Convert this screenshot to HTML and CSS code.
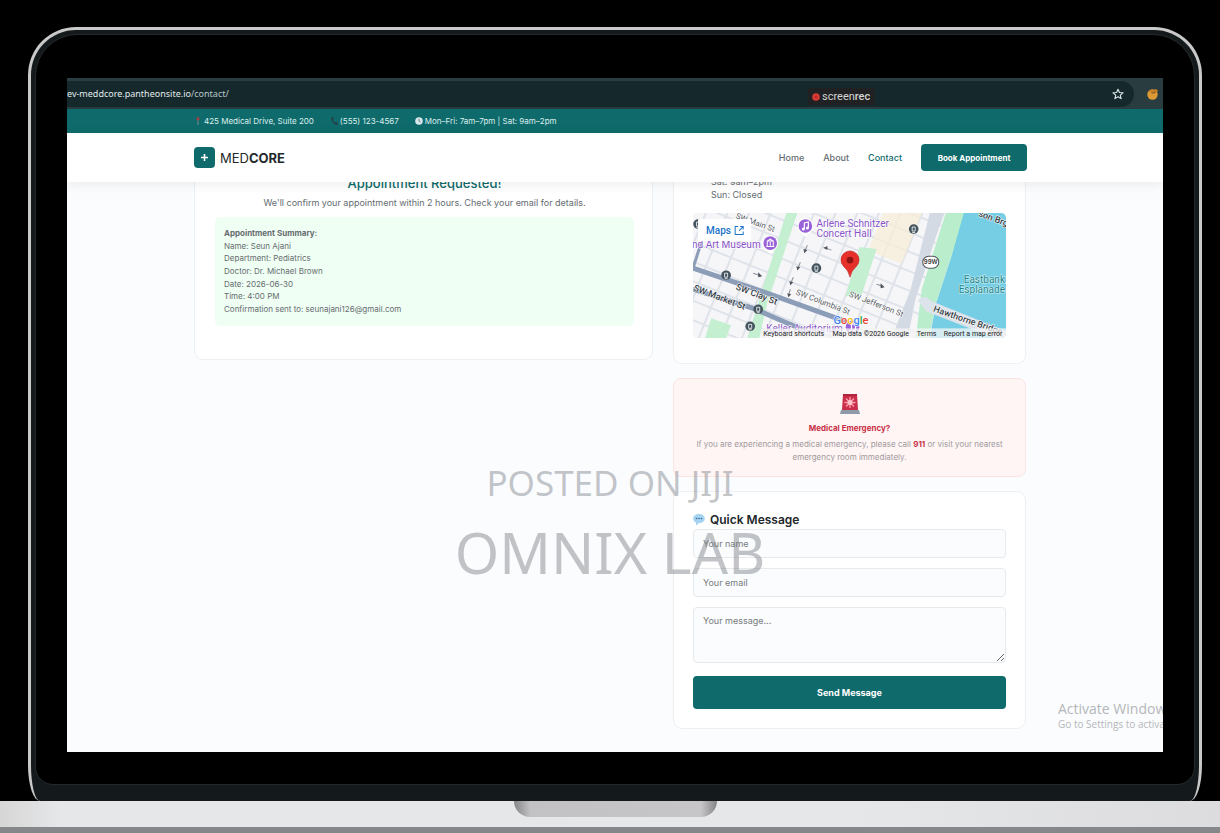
FILE: index.html
```html
<!DOCTYPE html>
<html lang="en">
<head>
    <meta charset="UTF-8">
    <meta name="viewport" content="width=device-width, initial-scale=1.0">
    <title>MedCore - Contact</title>
    <link rel="stylesheet" href="styles.css">
</head>
<body>
    <div class="lid">
        <div class="bezel">
            <div class="screen">
                <!-- Browser bar -->
                <div class="browser">
                    <div class="address">
                        <span class="url">ev-meddcore.pantheonsite.io<span>/contact/</span></span>
                        <svg class="star" viewBox="0 0 12 12"><path d="M6 1.2 7.4 4.5 11 4.8 8.3 7.1 9.1 10.6 6 8.7 2.9 10.6 3.7 7.1 1 4.8 4.6 4.5Z" fill="none" stroke="#dfe8e9" stroke-width="1.1" stroke-linejoin="round"/></svg>
                    </div>
                    <svg class="avatar" viewBox="0 0 12 12"><circle cx="5.5" cy="6.5" r="5.2" fill="#dc9a35"/><path d="M1.5 3.5 4 1.5 6 2.3 9 1 11 2.5 10 4 7 5Z" fill="#c97f25"/><path d="M4.5 4.7 6.5 5.2 8.5 4.2" stroke="#5d3c18" fill="none" stroke-width=".8"/></svg>
                    <div class="recorder">
                        <svg viewBox="0 0 8 8"><circle cx="4" cy="4" r="3.8" fill="#d83a34"/><circle cx="4" cy="4" r="1.5" fill="#b92a28"/></svg>
                        <span>screen<b>rec</b></span>
                    </div>
                </div>

                <div class="topbar">
                    <span><svg viewBox="0 0 8 10"><path d="M4 4V9" stroke="#6f8f92"/><circle cx="4" cy="2.8" r="1.6" fill="#a83d4a"/></svg>425 Medical Drive, Suite 200</span>
                    <span><svg viewBox="0 0 8 10"><path d="M1 1.5 2.8 1 3.8 3.3 2.8 4.3Q3.5 6 5.2 6.8L6.2 5.9 8 7.2 7 9Q2 9 1 1.5Z" fill="#263f49"/></svg>(555) 123-4567</span>
                    <span><svg viewBox="0 0 8 10"><circle cx="4" cy="5" r="3.8" fill="#d9e7ea"/><path d="M4 2.8V5L5.6 6" stroke="#546e7a" fill="none" stroke-width=".8"/></svg>Mon–Fri: 7am–7pm | Sat: 9am–2pm</span>
                </div>

                <header class="navbar">
                    <a class="logo" href="#">
                        <svg viewBox="0 0 21 21"><rect width="21" height="21" rx="4" fill="#0f6b6b"/><path d="M10.5 7V14M7 10.5H14" stroke="#fff" stroke-width="1.6"/></svg>
                        <span>MED<b>CORE</b></span>
                    </a>
                    <nav>
                        <a href="#">Home</a>
                        <a href="#">About</a>
                        <a class="active" href="#">Contact</a>
                        <button class="book">Book Appointment</button>
                    </nav>
                </header>

                <main>
                    <section class="card request">
                        <h2>Appointment Requested!</h2>
                        <p>We'll confirm your appointment within 2 hours. Check your email for details.</p>
                        <div class="summary">
                            <strong>Appointment Summary:</strong>
                            <span>Name: Seun Ajani</span>
                            <span>Department: Pediatrics</span>
                            <span>Doctor: Dr. Michael Brown</span>
                            <span>Date: 2026-06-30</span>
                            <span>Time: 4:00 PM</span>
                            <span>Confirmation sent to: seunajani126@gmail.com</span>
                        </div>
                    </section>

                    <div class="side">
                        <section class="card hours">
                            <p>Sat: 9am–2pm<br>Sun: Closed</p>
                            <svg class="map" viewBox="0 0 312 125">
                                <rect width="312" height="125" fill="#dfe3ea"/>
                                <!-- city blocks -->
                                <g transform="rotate(22 156 62)">
                                    <defs>
                                        <pattern id="blocks" width="20" height="18" patternUnits="userSpaceOnUse">
                                            <rect x="1" y="1" width="18" height="16" rx="1" fill="#f6f6f8"/>
                                        </pattern>
                                    </defs>
                                    <rect x="-60" y="-120" width="310" height="360" fill="url(#blocks)"/>
                                    <path d="M164-30h36v62h-36z" fill="#f8eed6" opacity=".7"/>
                                </g>
                                <!-- parks -->
                                <path d="M93 0H104L74 90 66 125H54L68 80Z" fill="#c4efd1"/>
                                <path d="M166 34 183 36 168 82 152 83Z" fill="#c4efd1"/>
                                <path d="M18 105 38 112 33 125H12Z" fill="#c4efd1"/>
                                <!-- river -->
                                <path d="M252 0H272L242 90 235 125H222L228 76Z" fill="#b9edcb"/>
                                <path d="M236 0H250L222 85 214 125H198L217 76Z" fill="#d3dae4"/>
                                <path d="M270 0H312V125H236L242 91 258 42Z" fill="#76cee5"/>
                                <path d="M224 87Q231 80 238 88L312 118V125H302L232 98Z" fill="#dce3ea"/>
                                <path d="M0 55 80 82 152 108M0 76 60 95 115 119" fill="none" stroke="#8c9db8" stroke-width="5"/>
                                <path d="M0 55 8 30" stroke="#8c9db8" stroke-width="3"/>
                                <!-- one-way arrows -->
                                <g fill="none" stroke="#8a9098" stroke-width="1"><path d="M111 39 114 32M104 57 107 49M97 71 100 64M95 83 97 76M130 34 138 37M60 60 66 62M183 71 189 73"/></g>
                                <g fill="#50565e"><path d="M110 36 114 37 111 40ZM103 53 107 54 104 57ZM96 68 100 69 97 72ZM94 80 98 81 95 84ZM134 33V37L130 35ZM65 59V64L69 63ZM187 70V75L191 74Z"/></g>
                                <!-- street names -->
                                <g class="street">
                                    <text transform="translate(42 5) rotate(20)">SW Main St</text>
                                    <text transform="translate(102 81) rotate(21)">SW Columbia St</text>
                                    <text transform="translate(155 83) rotate(21)">SW Jefferson St</text>
                                </g>
                                <g class="street major">
                                    <text transform="translate(42 76) rotate(21)">SW Clay St</text>
                                    <text transform="translate(0 77) rotate(21)">SW Market St</text>
                                    <text transform="translate(239 98) rotate(19)">Hawthorne Bridge</text>
                                    <text transform="translate(284 3) rotate(20)">son Brg</text>
                                </g>
                                <!-- transit stops -->
                                <g class="stops">
                                    <g id="stop"><circle cx="33" cy="62" r="4.8" fill="#44545f"/><path d="M31.500 60h3v4h-3zM31.500 65.500h3" stroke="#fff" stroke-width=".8" fill="none"/></g>
                                    <use href="#stop" x="90" y="-7"/>
                                    <use href="#stop" x="187" y="-46"/>
                                    <use href="#stop" x="32" y="34"/>
                                    <use href="#stop" x="24" y="51"/>
                                    <use href="#stop" x="-28" y="-51"/>
                                </g>
                                <!-- places -->
                                <g id="pin"><path d="M112 5a8 8 0 0 1 5 14l-5 5-5-5a8 8 0 0 1 5-14Z" fill="#fff"/><circle cx="112" cy="13" r="6.8" fill="#9a62d8"/></g>
                                <use href="#pin" x="-35" y="17"/>
                                <use href="#pin" x="47" y="101"/>
                                <path d="M111 16V10L115 9V15M158 118V111L162 110V117" fill="none" stroke="#fff" stroke-width="1.2"/><circle cx="110" cy="16" r="1.5" fill="#fff"/><circle cx="114" cy="15" r="1.5" fill="#fff"/><circle cx="157" cy="118" r="1.5" fill="#fff"/><circle cx="161" cy="117" r="1.5" fill="#fff"/>
                                <path d="M74 33V28H80V33M73 33.500H81M74 28 77 26 80 28M77 29V33" fill="none" stroke="#fff" stroke-width="1"/>
                                <g class="place"><text x="123" y="14">Arlene Schnitzer</text><text x="123" y="24">Concert Hall</text><text x="-1" y="35">nd Art Museum</text><text x="73" y="119">Keller Auditorium</text></g>
                                <g class="park"><text x="311" y="70">Eastbank</text><text x="311" y="80">Esplanade</text></g>
                                <rect x="229" y="43" width="16" height="12" rx="6" fill="#fff" stroke="#50565e"/>
                                <text class="route" x="237" y="51">99W</text>
                                <path d="M156.500 64Q155 57 150 53A9 9 0 1 1 163 53Q158 57 156.500 64Z" fill="#e8302a" stroke="#b52220" stroke-width=".6"/><circle cx="156.500" cy="47" r="3.300" fill="#8e1512"/>
                                <text class="google" x="140" y="111"><tspan fill="#4285f4">G</tspan><tspan fill="#ea4335">o</tspan><tspan fill="#fbbc04">o</tspan><tspan fill="#4285f4">g</tspan><tspan fill="#34a853">l</tspan><tspan fill="#ea4335">e</tspan></text>
                                <rect x="5" y="6" width="53" height="22" rx="1" fill="#fff"/>
                                <text class="maps-link" x="13" y="21">Maps</text>
                                <path d="M45 13.500H42V21.500H50V18.500M46 17.500 50 13.500M47 13.500H50V16.500" fill="none" stroke="#1a73c8" stroke-width="1"/>
                                <rect x="69" y="115" width="243" height="10" fill="#f5f6f7" opacity=".75"/>
                                <g class="credits"><text x="70" y="123">Keyboard shortcuts</text><text x="139" y="123">Map data ©2026 Google</text><text x="223" y="123">Terms</text><text x="250" y="123">Report a map error</text></g>
                            </svg>
                        </section>

                        <section class="emergency">
                            <svg viewBox="0 0 20 20"><path d="M3 0H17L18 16H2Z" fill="#c92f4a"/><path d="M3 0H17V2H3Z" fill="#b4233d"/><path d="M1 16H19L20 20H0Z" fill="#8e9aa8"/><path d="M10 3V14M4.500 8.500H15.500M6 4.500 14 12.500M14 4.500 6 12.500" stroke="#ff9dab" stroke-width="1.300"/><circle cx="10" cy="8.500" r="2.500" fill="#ffc3cb"/></svg>
                            <h3>Medical Emergency?</h3>
                            <p>If you are experiencing a medical emergency, please call <strong>911</strong> or visit your nearest emergency room immediately.</p>
                        </section>

                        <form class="card message">
                            <h2><svg viewBox="0 0 12 12"><path d="M6 0C9.500 0 11.800 1.900 11.800 4.500S9.500 9 6 9L3 11.500V8.500C1 8 .2 6.400.2 4.500.2 1.900 2.500 0 6 0Z" fill="#a5d3f1"/><circle cx="3.500" cy="4.500" r=".8" fill="#37658c"/><circle cx="6" cy="4.500" r=".8" fill="#37658c"/><circle cx="8.500" cy="4.500" r=".8" fill="#37658c"/></svg>Quick Message</h2>
                            <input type="text" placeholder="Your name" aria-label="Your name">
                            <input type="email" placeholder="Your email" aria-label="Your email">
                            <textarea placeholder="Your message..." aria-label="Your message"></textarea>
                            <button type="button">Send Message</button>
                        </form>
                    </div>
                </main>

                <div class="activate">
                    <p>Activate Windows</p>
                    <small>Go to Settings to activate Windows.</small>
                </div>
            </div>
        </div>
    </div>
    <div class="base"><div class="notch"></div></div>

    <div class="watermark">
        <p>POSTED ON JIJI</p>
        <strong>OMNIX LAB</strong>
    </div>
</body>
</html>
```

FILE: styles.css
```css
* {
    box-sizing: border-box;
}
body {
    margin: 0;
    min-height: 100vh;
    display: flex;
    flex-direction: column;
    position: relative;
    overflow-x: hidden;
    background: #000;
    color: #666c70;
    font-family: Inter, "Liberation Sans", sans-serif;
    font-size: 9px;
}
h2, h3, p {
    margin: 0;
}
a {
    color: inherit;
    text-decoration: none;
}
button {
    border: 0;
    border-radius: 4px;
    background: #0f6b6b;
    color: #fff;
    font-family: inherit;
    font-size: 9px;
    font-weight: 700;
}

/* Laptop */
.lid {
    flex: 1;
    display: flex;
    margin: 27px 18px 0 28px;
    padding: 4px 4px 16px;
    border: 3px solid #c9c9c9;
    border-bottom: 0;
    border-radius: 48px 48px 12px 12px / 48px 48px 36px 36px;
    background: #14191b;
}
.bezel {
    flex: 1;
    display: flex;
    min-width: 0;
    padding: 43px 31px 32px;
    border: 1px solid #25292b;
    border-radius: 42px 42px 18px 18px;
    background: #000;
}
.screen {
    flex: 1;
    display: flex;
    flex-direction: column;
    min-width: 0;
    position: relative;
    overflow: hidden;
    background: #fbfcfe;
}
.base {
    height: 32px;
    border-bottom: 6px solid #85878a;
    background: linear-gradient(90deg, #d6d6d6, #e6e7e9 5%, #e6e7e9 70%, #dcdcde);
}
.notch {
    width: 203px;
    height: 16px;
    margin: 0 auto;
    position: relative;
    left: 5px;
    border-radius: 0 0 16px 16px;
    background: linear-gradient(90deg, #858587, #c2c2c4 8%, #c6c6c8 92%, #858587);
}

/* Browser */
.browser {
    display: flex;
    align-items: center;
    position: relative;
    height: 31px;
    padding-right: 4px;
    background: #293d40;
}
.address {
    flex: 1;
    display: flex;
    align-items: center;
    justify-content: space-between;
    height: 26px;
    margin-right: 13px;
    padding-right: 10px;
    border-radius: 0 13px 13px 0;
    background: #15292d;
}
.url {
    color: #e3eaeb;
    font-family: "Noto Sans", sans-serif;
    font-size: 9px;
}
.url span {
    color: #bac6c8;
}
.star, .avatar {
    width: 12px;
    height: 12px;
}
.recorder {
    display: flex;
    align-items: center;
    gap: 2px;
    position: absolute;
    left: 741px;
    top: 10px;
    width: 67px;
    height: 17px;
    padding-left: 4px;
    background: #202123;
    color: #d5d5d5;
    font-family: Roboto, sans-serif;
    font-size: 11px;
}
.recorder svg {
    width: 8px;
    height: 8px;
}
.recorder b {
    font-weight: 500;
}

/* Header */
.topbar {
    display: flex;
    align-items: center;
    gap: 16px;
    height: 24px;
    padding: 0 127px;
    background: #0f6b6b;
    color: #dceeed;
    font-size: 8px;
}
.topbar span {
    display: flex;
    align-items: center;
    gap: 2px;
}
.topbar svg {
    width: 8px;
    height: 10px;
}
.navbar {
    display: flex;
    align-items: center;
    justify-content: space-between;
    position: relative;
    z-index: 1;
    height: 49px;
    padding: 0 136px 0 127px;
    background: #fff;
    box-shadow: 0 2px 12px rgba(0,0,0,0.08);
}
.logo {
    display: flex;
    align-items: center;
    gap: 5px;
    color: #24292c;
    font-size: 13px;
}
.logo svg {
    width: 21px;
    height: 21px;
}
.navbar nav {
    display: flex;
    align-items: center;
    gap: 19px;
    font-weight: 500;
}
.navbar .active {
    color: #0f6b6b;
}
.book {
    width: 106px;
    height: 27px;
    padding: 0;
    font-size: 8px;
}

/* Content */
main {
    flex: 1;
    display: grid;
    grid-template-columns: 459fr 353fr;
    gap: 20px;
    align-items: start;
    margin-top: -8px;
    padding: 0 137px 20px 127px;
}
.card {
    border: 1px solid #edf0f2;
    border-radius: 9px;
    background: #fff;
}
.request {
    padding: 0 18px 33px 20px;
    border-top: 0;
}
.request h2 {
    color: #0f6b6b;
    font-size: 13px;
    font-weight: 500;
    line-height: 18px;
    text-align: center;
}
.request p {
    margin: 4px 0 7px;
    line-height: 14px;
    text-align: center;
}
.summary {
    display: flex;
    flex-direction: column;
    justify-content: space-between;
    min-height: 109px;
    padding: 10px 9px 11px;
    border-radius: 5px;
    background: #f0fff4;
    font-size: 8px;
    line-height: 12px;
}
.side {
    display: flex;
    flex-direction: column;
    gap: 14px;
}
.hours {
    padding: 1px 19px 25px;
    border-top: 0;
}
.hours p {
    padding-left: 18px;
    line-height: 13px;
}
.map {
    display: block;
    width: 100%;
    margin-top: 12px;
    border-radius: 5px;
}
.street {
    fill: #565b61;
    font-family: Roboto, sans-serif;
    font-size: 8px;
    paint-order: stroke;
    stroke: #fff;
    stroke-width: 1px;
}
.major {
    fill: #343c46;
    font-size: 9px;
    font-weight: 500;
}
.place {
    fill: #8954c7;
    font-family: Roboto, sans-serif;
    font-size: 10px;
    paint-order: stroke;
    stroke: #fff;
    stroke-width: 1px;
}
.park {
    fill: #20858c;
    font-family: Roboto, sans-serif;
    font-size: 10px;
    paint-order: stroke;
    stroke: #d6f2f5;
    stroke-width: 1px;
    text-anchor: end;
}
.route {
    fill: #333;
    font-size: 6px;
    font-weight: 600;
    text-anchor: middle;
}
.google {
    font-family: Roboto, sans-serif;
    font-size: 11px;
    font-weight: 500;
    paint-order: stroke;
    stroke: #fff;
    stroke-width: 1px;
}
.maps-link {
    fill: #1a73c8;
    font-family: Roboto, sans-serif;
    font-size: 10px;
    font-weight: 500;
}
.credits {
    fill: #222;
    font-family: Roboto, sans-serif;
    font-size: 7px;
}
.emergency {
    padding: 15px 14px 12px;
    border: 1px solid #fbe3e3;
    border-radius: 8px;
    background: #fff5f5;
    color: #a09a9c;
    font-size: 8px;
    line-height: 13px;
    text-align: center;
}
.emergency svg {
    display: block;
    width: 20px;
    height: 20px;
    margin: 0 auto 8px;
}
.emergency h3 {
    margin-bottom: 3px;
    font-size: 8px;
}
.emergency h3, .emergency strong {
    color: #c92f45;
}
.message {
    display: flex;
    flex-direction: column;
    padding: 19px;
}
.message h2 {
    display: flex;
    align-items: center;
    gap: 5px;
    color: #22272a;
    font-size: 12px;
    font-weight: 600;
    line-height: 18px;
}
.message h2 svg {
    width: 12px;
    height: 12px;
}
.message input, .message textarea {
    width: 100%;
    height: 29px;
    margin: 0 0 10px;
    padding: 0 9px;
    border: 1px solid #e7eaed;
    border-radius: 4px;
    background: #fafcfd;
    color: #333;
    font-family: inherit;
    font-size: 9px;
}
.message textarea {
    height: 56px;
    margin-bottom: 13px;
    padding: 7px 9px;
    resize: vertical;
}
.message ::placeholder {
    color: #777b7e;
}
.message button {
    height: 33px;
}

/* Overlays */
.activate {
    position: absolute;
    left: 991px;
    bottom: 20px;
    color: #b4b7ba;
    font-family: "Open Sans", sans-serif;
    font-size: 14px;
    line-height: 16px;
    white-space: nowrap;
}
.activate small {
    display: block;
    font-size: 10px;
    line-height: 15px;
}
.watermark {
    position: absolute;
    top: 458px;
    left: 0;
    right: 0;
    color: rgba(110,115,122,0.42);
    font-family: "Noto Sans", sans-serif;
    font-size: 35px;
    line-height: 50px;
    text-align: center;
    pointer-events: none;
}
.watermark strong {
    display: block;
    font-size: 57px;
    font-weight: 400;
    line-height: 88px;
}
```
